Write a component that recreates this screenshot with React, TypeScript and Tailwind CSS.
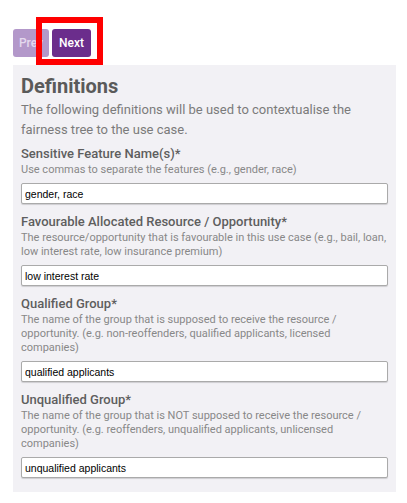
const fields = [
  {
    label: "Sensitive Feature Name(s)*",
    hint: "Use commas to separate the features (e.g., gender, race)",
    value: "gender, race",
  },
  {
    label: "Favourable Allocated Resource / Opportunity*",
    hint: "The resource/opportunity that is favourable in this use case (e.g., bail, loan, low interest rate, low insurance premium)",
    value: "low interest rate",
  },
  {
    label: "Qualified Group*",
    hint: "The name of the group that is supposed to receive the resource / opportunity. (e.g. non-reoffenders, qualified applicants, licensed companies)",
    value: "qualified applicants",
  },
  {
    label: "Unqualified Group*",
    hint: "The name of the group that is NOT supposed to receive the resource / opportunity. (e.g. reoffenders, unqualified applicants, unlicensed companies)",
    value: "unqualified applicants",
  },
];

export default function App() {
  return (
    <div className="min-h-[503px] bg-white px-[13px] pt-[29px] font-['Roboto',sans-serif]">
      <div className="relative flex gap-[3px]">
        <button className="h-[28px] w-[36px] rounded-[3px] bg-[#b398ca] text-[12px] font-medium text-[#e4d9ee]">
          Prev
        </button>
        <button className="h-[28px] w-[39px] rounded-[3px] bg-[#6b2d8c] text-[12px] font-medium text-white">
          Next
        </button>
        <div className="absolute left-[23px] top-[-12px] h-[48px] w-[67px] border-[6px] border-[#ff0000]" />
      </div>

      <div className="mt-[8px] w-[383px] bg-[#f2f1f5] px-[8px] pb-[14px] pt-[7px]">
        <h1 className="text-[20px] font-bold leading-[28px] text-[#5a5a5a]">Definitions</h1>
        <p className="text-[13px] leading-[20px] text-[#7b7b7b]">
          The following definitions will be used to contextualise the fairness tree to the use case.
        </p>

        {fields.map((f, i) => (
          <div key={f.label} className={i === 0 ? "mt-[6px]" : "mt-[10px]"}>
            <div className="text-[13px] font-medium leading-[16px] text-[#5e5e5e]">{f.label}</div>
            <div className="mt-[1px] text-[11px] leading-[14px] text-[#888888]">{f.hint}</div>
            <input
              readOnly
              value={f.value}
              className="mt-[6px] block h-[21px] w-full rounded-[2px] border border-[#aaaaaa] bg-white px-[3px] font-['Liberation_Sans',Arial,sans-serif] text-[10.5px] text-black shadow-[0_1px_1px_rgba(0,0,0,0.15)] outline-none"
            />
          </div>
        ))}
      </div>
    </div>
  );
}
